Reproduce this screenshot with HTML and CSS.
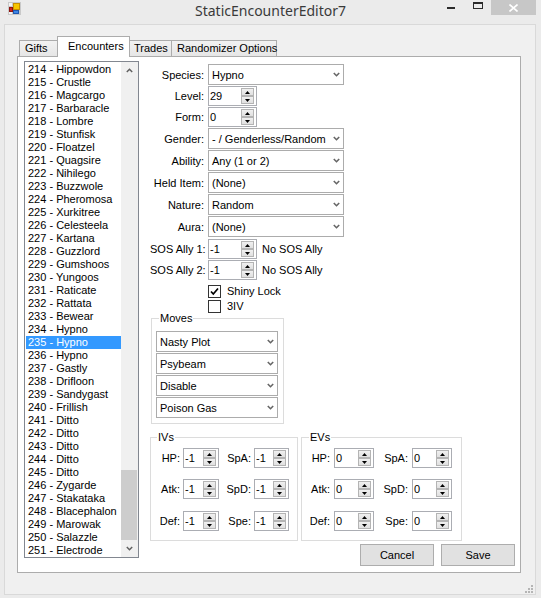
FILE: index.html
```html
<!DOCTYPE html>
<html>
<head>
<meta charset="utf-8">
<title>StaticEncounterEditor7</title>
<link rel="stylesheet" href="styles.css">
</head>
<body>
<div class="window">
  <div class="titlebar">
    <div class="tb-icon">
      <svg width="13" height="13" viewBox="0 0 13 13">
        <rect x="0" y="0" width="13" height="13" fill="#c9c9c9"/>
        <rect x="1" y="1" width="3" height="3" fill="#f4f4f4"/>
        <rect x="1" y="10" width="3" height="2" fill="#f4f4f4"/>
        <rect x="5.5" y="1.5" width="6" height="6" fill="#f7c600" stroke="#c98f00"/>
        <rect x="1.5" y="5.5" width="3" height="4" fill="#d42a1e" stroke="#8e1410"/>
        <rect x="5.5" y="8.5" width="5" height="3" fill="#3d86e6" stroke="#1f57b0"/>
      </svg>
    </div>
    <div class="tb-title">StaticEncounterEditor7</div>
    <div class="tb-buttons">
      <span class="tb-min"></span>
      <span class="tb-max"></span>
      <span class="tb-close">
        <svg width="9" height="8" viewBox="0 0 9 8"><path d="M0.5 0.5 L8.5 7.5 M8.5 0.5 L0.5 7.5" stroke="#fff" stroke-width="1.6" fill="none"/></svg>
      </span>
    </div>
  </div>

  <div class="client">
    <div class="tabs">
      <div class="tab tab-gifts">Gifts</div>
      <div class="tab active">Encounters</div>
      <div class="tab tab-trades">Trades</div>
      <div class="tab tab-rand">Randomizer Options</div>
    </div>

    <div class="panel">
      <div class="listbox">
        <div class="items">
          <div class="item">214 - Hippowdon</div>
          <div class="item">215 - Crustle</div>
          <div class="item">216 - Magcargo</div>
          <div class="item">217 - Barbaracle</div>
          <div class="item">218 - Lombre</div>
          <div class="item">219 - Stunfisk</div>
          <div class="item">220 - Floatzel</div>
          <div class="item">221 - Quagsire</div>
          <div class="item">222 - Nihilego</div>
          <div class="item">223 - Buzzwole</div>
          <div class="item">224 - Pheromosa</div>
          <div class="item">225 - Xurkitree</div>
          <div class="item">226 - Celesteela</div>
          <div class="item">227 - Kartana</div>
          <div class="item">228 - Guzzlord</div>
          <div class="item">229 - Gumshoos</div>
          <div class="item">230 - Yungoos</div>
          <div class="item">231 - Raticate</div>
          <div class="item">232 - Rattata</div>
          <div class="item">233 - Bewear</div>
          <div class="item">234 - Hypno</div>
          <div class="item sel">235 - Hypno</div>
          <div class="item">236 - Hypno</div>
          <div class="item">237 - Gastly</div>
          <div class="item">238 - Drifloon</div>
          <div class="item">239 - Sandygast</div>
          <div class="item">240 - Frillish</div>
          <div class="item">241 - Ditto</div>
          <div class="item">242 - Ditto</div>
          <div class="item">243 - Ditto</div>
          <div class="item">244 - Ditto</div>
          <div class="item">245 - Ditto</div>
          <div class="item">246 - Zygarde</div>
          <div class="item">247 - Stakataka</div>
          <div class="item">248 - Blacephalon</div>
          <div class="item">249 - Marowak</div>
          <div class="item">250 - Salazzle</div>
          <div class="item">251 - Electrode</div>
        </div>
        <div class="vscroll">
          <div class="sb-btn">
            <svg width="7" height="5" viewBox="0 0 7 5"><path d="M0.8 4 L3.5 1.3 L6.2 4" stroke="#606060" stroke-width="1.5" fill="none"/></svg>
          </div>
          <div class="sb-track"><div class="sb-thumb"></div></div>
          <div class="sb-btn">
            <svg width="7" height="5" viewBox="0 0 7 5"><path d="M0.8 1 L3.5 3.7 L6.2 1" stroke="#606060" stroke-width="1.5" fill="none"/></svg>
          </div>
        </div>
      </div>

      <div class="form">
        <div class="row first">
          <div class="lbl">Species:</div>
          <div class="combo"><span>Hypno</span><svg class="chev" width="7" height="5" viewBox="0 0 7 5"><path d="M0.8 1 L3.5 3.7 L6.2 1" stroke="#666" stroke-width="1.6" fill="none"/></svg></div>
        </div>
        <div class="row">
          <div class="lbl">Level:</div>
          <div class="num num-main"><span class="v">29</span><span class="spin"><span class="sp"><svg width="5" height="3" viewBox="0 0 5 3"><path d="M0 3 L2.5 0 L5 3Z" fill="#000"/></svg></span><span class="sp"><svg width="5" height="3" viewBox="0 0 5 3"><path d="M0 0 L2.5 3 L5 0Z" fill="#000"/></svg></span></span></div>
        </div>
        <div class="row">
          <div class="lbl">Form:</div>
          <div class="num num-main"><span class="v">0</span><span class="spin"><span class="sp"><svg width="5" height="3" viewBox="0 0 5 3"><path d="M0 3 L2.5 0 L5 3Z" fill="#000"/></svg></span><span class="sp"><svg width="5" height="3" viewBox="0 0 5 3"><path d="M0 0 L2.5 3 L5 0Z" fill="#000"/></svg></span></span></div>
        </div>
        <div class="row">
          <div class="lbl">Gender:</div>
          <div class="combo"><span>- / Genderless/Random</span><svg class="chev" width="7" height="5" viewBox="0 0 7 5"><path d="M0.8 1 L3.5 3.7 L6.2 1" stroke="#666" stroke-width="1.6" fill="none"/></svg></div>
        </div>
        <div class="row">
          <div class="lbl">Ability:</div>
          <div class="combo"><span>Any (1 or 2)</span><svg class="chev" width="7" height="5" viewBox="0 0 7 5"><path d="M0.8 1 L3.5 3.7 L6.2 1" stroke="#666" stroke-width="1.6" fill="none"/></svg></div>
        </div>
        <div class="row">
          <div class="lbl">Held Item:</div>
          <div class="combo"><span>(None)</span><svg class="chev" width="7" height="5" viewBox="0 0 7 5"><path d="M0.8 1 L3.5 3.7 L6.2 1" stroke="#666" stroke-width="1.6" fill="none"/></svg></div>
        </div>
        <div class="row">
          <div class="lbl">Nature:</div>
          <div class="combo"><span>Random</span><svg class="chev" width="7" height="5" viewBox="0 0 7 5"><path d="M0.8 1 L3.5 3.7 L6.2 1" stroke="#666" stroke-width="1.6" fill="none"/></svg></div>
        </div>
        <div class="row">
          <div class="lbl">Aura:</div>
          <div class="combo"><span>(None)</span><svg class="chev" width="7" height="5" viewBox="0 0 7 5"><path d="M0.8 1 L3.5 3.7 L6.2 1" stroke="#666" stroke-width="1.6" fill="none"/></svg></div>
        </div>
        <div class="row sos1">
          <div class="lbl">SOS Ally 1:</div>
          <div class="num num-main"><span class="v">-1</span><span class="spin"><span class="sp"><svg width="5" height="3" viewBox="0 0 5 3"><path d="M0 3 L2.5 0 L5 3Z" fill="#000"/></svg></span><span class="sp"><svg width="5" height="3" viewBox="0 0 5 3"><path d="M0 0 L2.5 3 L5 0Z" fill="#000"/></svg></span></span></div>
          <div class="note">No SOS Ally</div>
        </div>
        <div class="row">
          <div class="lbl">SOS Ally 2:</div>
          <div class="num num-main"><span class="v">-1</span><span class="spin"><span class="sp"><svg width="5" height="3" viewBox="0 0 5 3"><path d="M0 3 L2.5 0 L5 3Z" fill="#000"/></svg></span><span class="sp"><svg width="5" height="3" viewBox="0 0 5 3"><path d="M0 0 L2.5 3 L5 0Z" fill="#000"/></svg></span></span></div>
          <div class="note">No SOS Ally</div>
        </div>
        <div class="chkrow shiny">
          <span class="box"><svg width="11" height="11" viewBox="0 0 11 11"><path d="M2 5.5 L4.3 8 L9 2.5" stroke="#000" stroke-width="1.7" fill="none"/></svg></span>
          <span class="chktext">Shiny Lock</span>
        </div>
        <div class="chkrow iv3">
          <span class="box"></span>
          <span class="chktext">3IV</span>
        </div>

        <fieldset class="group moves">
          <legend>Moves</legend>
          <div class="combo mcombo"><span>Nasty Plot</span><svg class="chev" width="7" height="5" viewBox="0 0 7 5"><path d="M0.8 1 L3.5 3.7 L6.2 1" stroke="#666" stroke-width="1.6" fill="none"/></svg></div>
          <div class="combo mcombo"><span>Psybeam</span><svg class="chev" width="7" height="5" viewBox="0 0 7 5"><path d="M0.8 1 L3.5 3.7 L6.2 1" stroke="#666" stroke-width="1.6" fill="none"/></svg></div>
          <div class="combo mcombo"><span>Disable</span><svg class="chev" width="7" height="5" viewBox="0 0 7 5"><path d="M0.8 1 L3.5 3.7 L6.2 1" stroke="#666" stroke-width="1.6" fill="none"/></svg></div>
          <div class="combo mcombo"><span>Poison Gas</span><svg class="chev" width="7" height="5" viewBox="0 0 7 5"><path d="M0.8 1 L3.5 3.7 L6.2 1" stroke="#666" stroke-width="1.6" fill="none"/></svg></div>
        </fieldset>

        <div class="stats">
          <fieldset class="group ivs">
            <legend>IVs</legend>
            <div class="sgrid ivgrid">
              <div class="slbl">HP:</div>
              <div class="num"><span class="v">-1</span><span class="spin"><span class="sp"><svg width="5" height="3" viewBox="0 0 5 3"><path d="M0 3 L2.5 0 L5 3Z" fill="#000"/></svg></span><span class="sp"><svg width="5" height="3" viewBox="0 0 5 3"><path d="M0 0 L2.5 3 L5 0Z" fill="#000"/></svg></span></span></div>
              <div class="slbl">SpA:</div>
              <div class="num"><span class="v">-1</span><span class="spin"><span class="sp"><svg width="5" height="3" viewBox="0 0 5 3"><path d="M0 3 L2.5 0 L5 3Z" fill="#000"/></svg></span><span class="sp"><svg width="5" height="3" viewBox="0 0 5 3"><path d="M0 0 L2.5 3 L5 0Z" fill="#000"/></svg></span></span></div>
              <div class="slbl">Atk:</div>
              <div class="num"><span class="v">-1</span><span class="spin"><span class="sp"><svg width="5" height="3" viewBox="0 0 5 3"><path d="M0 3 L2.5 0 L5 3Z" fill="#000"/></svg></span><span class="sp"><svg width="5" height="3" viewBox="0 0 5 3"><path d="M0 0 L2.5 3 L5 0Z" fill="#000"/></svg></span></span></div>
              <div class="slbl">SpD:</div>
              <div class="num"><span class="v">-1</span><span class="spin"><span class="sp"><svg width="5" height="3" viewBox="0 0 5 3"><path d="M0 3 L2.5 0 L5 3Z" fill="#000"/></svg></span><span class="sp"><svg width="5" height="3" viewBox="0 0 5 3"><path d="M0 0 L2.5 3 L5 0Z" fill="#000"/></svg></span></span></div>
              <div class="slbl">Def:</div>
              <div class="num"><span class="v">-1</span><span class="spin"><span class="sp"><svg width="5" height="3" viewBox="0 0 5 3"><path d="M0 3 L2.5 0 L5 3Z" fill="#000"/></svg></span><span class="sp"><svg width="5" height="3" viewBox="0 0 5 3"><path d="M0 0 L2.5 3 L5 0Z" fill="#000"/></svg></span></span></div>
              <div class="slbl">Spe:</div>
              <div class="num"><span class="v">-1</span><span class="spin"><span class="sp"><svg width="5" height="3" viewBox="0 0 5 3"><path d="M0 3 L2.5 0 L5 3Z" fill="#000"/></svg></span><span class="sp"><svg width="5" height="3" viewBox="0 0 5 3"><path d="M0 0 L2.5 3 L5 0Z" fill="#000"/></svg></span></span></div>
            </div>
          </fieldset>
          <fieldset class="group evs">
            <legend>EVs</legend>
            <div class="sgrid evgrid">
              <div class="slbl">HP:</div>
              <div class="num"><span class="v">0</span><span class="spin"><span class="sp"><svg width="5" height="3" viewBox="0 0 5 3"><path d="M0 3 L2.5 0 L5 3Z" fill="#000"/></svg></span><span class="sp"><svg width="5" height="3" viewBox="0 0 5 3"><path d="M0 0 L2.5 3 L5 0Z" fill="#000"/></svg></span></span></div>
              <div class="slbl">SpA:</div>
              <div class="num"><span class="v">0</span><span class="spin"><span class="sp"><svg width="5" height="3" viewBox="0 0 5 3"><path d="M0 3 L2.5 0 L5 3Z" fill="#000"/></svg></span><span class="sp"><svg width="5" height="3" viewBox="0 0 5 3"><path d="M0 0 L2.5 3 L5 0Z" fill="#000"/></svg></span></span></div>
              <div class="slbl">Atk:</div>
              <div class="num"><span class="v">0</span><span class="spin"><span class="sp"><svg width="5" height="3" viewBox="0 0 5 3"><path d="M0 3 L2.5 0 L5 3Z" fill="#000"/></svg></span><span class="sp"><svg width="5" height="3" viewBox="0 0 5 3"><path d="M0 0 L2.5 3 L5 0Z" fill="#000"/></svg></span></span></div>
              <div class="slbl">SpD:</div>
              <div class="num"><span class="v">0</span><span class="spin"><span class="sp"><svg width="5" height="3" viewBox="0 0 5 3"><path d="M0 3 L2.5 0 L5 3Z" fill="#000"/></svg></span><span class="sp"><svg width="5" height="3" viewBox="0 0 5 3"><path d="M0 0 L2.5 3 L5 0Z" fill="#000"/></svg></span></span></div>
              <div class="slbl">Def:</div>
              <div class="num"><span class="v">0</span><span class="spin"><span class="sp"><svg width="5" height="3" viewBox="0 0 5 3"><path d="M0 3 L2.5 0 L5 3Z" fill="#000"/></svg></span><span class="sp"><svg width="5" height="3" viewBox="0 0 5 3"><path d="M0 0 L2.5 3 L5 0Z" fill="#000"/></svg></span></span></div>
              <div class="slbl">Spe:</div>
              <div class="num"><span class="v">0</span><span class="spin"><span class="sp"><svg width="5" height="3" viewBox="0 0 5 3"><path d="M0 3 L2.5 0 L5 3Z" fill="#000"/></svg></span><span class="sp"><svg width="5" height="3" viewBox="0 0 5 3"><path d="M0 0 L2.5 3 L5 0Z" fill="#000"/></svg></span></span></div>
            </div>
          </fieldset>
        </div>

        <div class="buttons">
          <div class="btn">Cancel</div>
          <div class="btn">Save</div>
        </div>
      </div>
    </div>

    <div class="grip">
      <svg width="8" height="8" viewBox="0 0 8 8" fill="#b5b5b5">
        <rect x="6" y="0" width="2" height="2"/>
        <rect x="3" y="3" width="2" height="2"/><rect x="6" y="3" width="2" height="2"/>
        <rect x="0" y="6" width="2" height="2"/><rect x="3" y="6" width="2" height="2"/><rect x="6" y="6" width="2" height="2"/>
      </svg>
    </div>
  </div>
</div>
</body>
</html>
```

FILE: styles.css
```css
* { box-sizing: border-box; }

html, body {
  margin: 0;
  padding: 0;
}

body {
  width: 541px;
  height: 598px;
  overflow: hidden;
  background: #ebebeb;
  font-family: "Liberation Sans", Arial, sans-serif;
  font-size: 11px;
  color: #000;
}

.window {
  width: 541px;
  height: 598px;
}

/* ---------- title bar ---------- */
.titlebar {
  height: 24px;
  display: grid;
  grid-template-columns: 1fr auto 1fr;
  align-items: start;
}

.tb-icon {
  padding: 2px 0 0 8px;
}

.tb-icon svg { display: block; }

.tb-title {
  font-family: "Noto Sans", "Open Sans", sans-serif;
  font-size: 14px;
  line-height: 22px;
  color: #3a3a3a;
  white-space: nowrap;
}

.tb-buttons {
  display: flex;
  justify-content: flex-end;
  align-items: flex-start;
}

.tb-min {
  width: 8px;
  height: 2px;
  margin-top: 7px;
  background: #2b2b2b;
}

.tb-max {
  width: 10px;
  height: 7px;
  margin-top: 2px;
  margin-left: 18px;
  border: 1px solid #2b2b2b;
  border-top-width: 2px;
}

.tb-close {
  width: 45px;
  height: 15px;
  margin-left: 8px;
  margin-right: 5px;
  background: #c7c7c7;
  display: flex;
  align-items: center;
  justify-content: center;
}

.tb-close svg { display: block; }

/* ---------- client ---------- */
.client {
  position: relative;
  margin-left: 4px;
  width: 532px;
  height: 571px;
  border: 1px solid #d9d9d9;
  background: #f0f0f0;
}

.tabs {
  display: flex;
  align-items: flex-end;
  height: 20px;
  margin-top: 11px;
  padding-left: 14px;
}

.tab {
  height: 16px;
  border: 1px solid #acacac;
  border-bottom: none;
  background: linear-gradient(#f2f2f2, #e6e6e6);
  line-height: 15px;
  padding-left: 5px;
  white-space: nowrap;
}

.tab-gifts { width: 40px; }
.tab-trades { width: 44px; }
.tab-rand { width: 106px; margin-left: -1px; }

.tab.active {
  position: relative;
  z-index: 1;
  width: 73px;
  height: 21px;
  margin: 0 -2px -1px -2px;
  background: #fff;
  line-height: 18px;
  padding-left: 10px;
}

.panel {
  margin-left: 12px;
  width: 504px;
  height: 517px;
  border: 1px solid #acacac;
  background: #fff;
  display: flex;
  align-items: flex-start;
}

/* ---------- list box ---------- */
.listbox {
  flex-shrink: 0;
  margin: 4px 0 0 6px;
  width: 115px;
  height: 497px;
  border: 1px solid #828790;
  display: flex;
  background: #fff;
}

.items {
  width: 96px;
  padding-top: 1px;
}

.item {
  margin-left: 1px;
  width: 95px;
  height: 13px;
  line-height: 13px;
  padding-left: 2px;
  white-space: nowrap;
  overflow: hidden;
}

.item.sel {
  background: #3399ff;
  color: #fff;
}

.vscroll {
  width: 17px;
  display: flex;
  flex-direction: column;
  background: #f0f0f0;
}

.sb-btn {
  height: 17px;
  display: flex;
  align-items: center;
  justify-content: center;
}

.sb-btn svg { display: block; }

.sb-track {
  flex: 1;
  display: flex;
  flex-direction: column;
  justify-content: flex-end;
}

.sb-thumb {
  width: 16px;
  height: 70px;
  background: #cdcdcd;
}

/* ---------- form ---------- */
.form {
  flex: 1;
  margin: 7px 0 0 11px;
  display: flex;
  flex-direction: column;
  align-items: flex-start;
}

.row {
  display: flex;
  align-items: center;
  margin-top: 1px;
}

.row.first { margin-top: 0; }
.row.sos1 { margin-top: 2px; }

.lbl {
  width: 54px;
  margin-right: 4px;
  text-align: right;
  white-space: nowrap;
  flex-shrink: 0;
}

.combo {
  width: 136px;
  height: 21px;
  border: 1px solid #acacac;
  background: #fff;
  display: flex;
  align-items: center;
  justify-content: space-between;
  padding: 0 3px 0 3px;
  white-space: nowrap;
}

.chev { display: block; flex-shrink: 0; }

.num {
  height: 20px;
  border: 1px solid #abadb3;
  background: #fff;
  display: flex;
  align-items: center;
  white-space: nowrap;
}

.num-main { width: 49px; }

.num .v {
  flex: 1;
  padding-left: 1px;
}

.spin {
  width: 13px;
  height: 16px;
  margin-right: 2px;
  display: flex;
  flex-direction: column;
}

.sp {
  height: 8px;
  border: 1px solid #b4b4b4;
  background: linear-gradient(#f0f0f0, #e0e0e0);
  display: flex;
  align-items: center;
  justify-content: center;
}

.sp svg { display: block; }

.note {
  margin-left: 5px;
  white-space: nowrap;
}

.chkrow {
  display: flex;
  align-items: center;
  height: 13px;
  margin-left: 58px;
}

.chkrow.shiny { margin-top: 5px; }
.chkrow.iv3 { margin-top: 2px; }

.box {
  width: 13px;
  height: 13px;
  border: 1px solid #333;
  background: #fff;
  display: flex;
  align-items: center;
  justify-content: center;
}

.box svg { display: block; }

.chktext {
  margin-left: 6px;
  line-height: 13px;
}

/* ---------- group boxes ---------- */
.group {
  margin: 0;
  border: 1px solid #dcdcdc;
  min-width: 0;
}

.group legend {
  padding: 0 1px;
  line-height: 13px;
}

.moves {
  width: 133px;
  margin: -1px 0 0 1px;
  padding: 6px 4px 5px 4px;
}

.moves legend { margin-left: 3px; }

.mcombo {
  width: 122px;
  margin-top: 1px;
}

.mcombo:first-of-type { margin-top: 0; }

.stats {
  display: flex;
  margin-top: 7px;
}

.ivs {
  width: 148px;
  padding: 4px 0 9px 3px;
}

.ivs legend { margin-left: 3px; }

.evs {
  width: 161px;
  margin-left: 3px;
  padding: 4px 0 9px 2px;
}

.evs legend { margin-left: 5px; }

.sgrid {
  display: grid;
  grid-template-rows: 20px 31px 32px;
  align-items: end;
}

.ivgrid {
  grid-template-columns: 26px 36px 29px 35px;
  column-gap: 3px;
}

.evgrid {
  grid-template-columns: 26px 40px 30px 40px;
  column-gap: 4px;
}

.slbl {
  height: 20px;
  line-height: 20px;
  text-align: right;
  white-space: nowrap;
}

/* ---------- buttons ---------- */
.buttons {
  align-self: flex-end;
  display: flex;
  gap: 7px;
  margin: 3px 5px 0 0;
}

.btn {
  width: 74px;
  height: 22px;
  border: 1px solid #adadad;
  background: #e1e1e1;
  display: flex;
  align-items: center;
  justify-content: center;
}

.grip {
  position: absolute;
  right: 2px;
  bottom: 1px;
}

.grip svg { display: block; }
```
